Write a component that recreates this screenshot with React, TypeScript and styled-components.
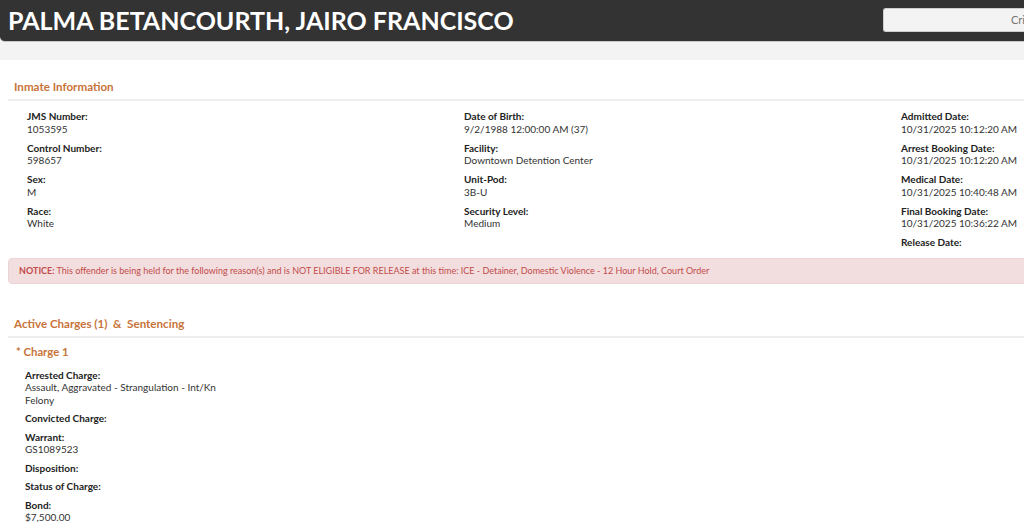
import styled, { createGlobalStyle } from 'styled-components'

const GlobalStyle = createGlobalStyle`
body {
    margin: 0;
    background: #ffffff;
    font-family: Lato, "Open Sans", "Liberation Sans", sans-serif;
    overflow: hidden;
}
`

const info = [
    [
        { label: "JMS Number:", value: "1053595" },
        { label: "Control Number:", value: "598657" },
        { label: "Sex:", value: "M" },
        { label: "Race:", value: "White" },
    ],
    [
        { label: "Date of Birth:", value: "9/2/1988 12:00:00 AM (37)" },
        { label: "Facility:", value: "Downtown Detention Center" },
        { label: "Unit-Pod:", value: "3B-U" },
        { label: "Security Level:", value: "Medium" },
    ],
    [
        { label: "Admitted Date:", value: "10/31/2025 10:12:20 AM" },
        { label: "Arrest Booking Date:", value: "10/31/2025 10:12:20 AM" },
        { label: "Medical Date:", value: "10/31/2025 10:40:48 AM" },
        { label: "Final Booking Date:", value: "10/31/2025 10:36:22 AM" },
        { label: "Release Date:", value: "" },
    ],
]

const charge = [
    { label: "Arrested Charge:", value: ["Assault, Aggravated - Strangulation - Int/Kn", "Felony"] },
    { label: "Convicted Charge:", value: [] },
    { label: "Warrant:", value: ["GS1089523"] },
    { label: "Disposition:", value: [] },
    { label: "Status of Charge:", value: [] },
    { label: "Bond:", value: ["$7,500.00"] },
]

const App = () => {
    return (
        <Page>
            <GlobalStyle />
            <Header>
                <Name>PALMA BETANCOURTH, JAIRO FRANCISCO</Name>
                <Search placeholder="Criteria" />
            </Header>
            <Band />
            <Panel>
                <SectionTitle>Inmate Information</SectionTitle>
                <InfoGrid>
                    {info.map((col, i) => (
                        <Column key={i}>
                            {col.map((f) => (
                                <Field key={f.label}>
                                    <Label>{f.label}</Label>
                                    {f.value && <Value>{f.value}</Value>}
                                </Field>
                            ))}
                        </Column>
                    ))}
                </InfoGrid>
                <Notice>
                    <b>NOTICE:</b> This offender is being held for the following reason(s) and is NOT ELIGIBLE FOR RELEASE at this time: ICE - Detainer, Domestic Violence - 12 Hour Hold, Court Order
                </Notice>
                <SectionTitle top={33}>Active Charges (1)&nbsp; &amp; &nbsp;Sentencing</SectionTitle>
                <ChargeTitle>* Charge 1</ChargeTitle>
                <ChargeList>
                    {charge.map((f) => (
                        <Field key={f.label}>
                            <Label>{f.label}</Label>
                            {f.value.map((v) => (
                                <Value key={v}>{v}</Value>
                            ))}
                        </Field>
                    ))}
                </ChargeList>
            </Panel>
        </Page>
    )
}

export default App

const Page = styled.div`
width: 1024px;
height: 532px;
overflow: hidden;
`

const Header = styled.div`
height: 41px;
background-color: #333333;
border-bottom: 1px solid #c8c8c8;
border-radius: 0 0 0 5px;
display: flex;
align-items: center;
justify-content: space-between;
padding-left: 8px;
`

const Name = styled.h1`
margin: 0;
color: #ffffff;
font-size: 25px;
font-weight: 700;
padding-bottom: 1px;
`

const Search = styled.input`
width: 141px;
height: 24px;
box-sizing: border-box;
margin-top: -2px;
background: #f3f3f3;
border: 1px solid #cfcfcf;
border-right: none;
border-radius: 3px 0 0 3px;
padding: 0 0 0 127px;
font-family: Lato, sans-serif;
font-size: 11px;
outline: none;

::placeholder {
    color: #a5b0b8;
}
`

const Band = styled.div`
height: 18px;
background: #f3f3f3;
`

const Panel = styled.div`
padding: 20px 0 0 8px;
`

const SectionTitle = styled.div<{ top?: number }>`
margin-top: ${({ top }) => top || 0}px;
padding: 0 0 5px 6px;
color: #c8733a;
font-size: 11.6px;
font-weight: 700;
line-height: 14px;
border-bottom: 2px solid #eeeeee;
`

const InfoGrid = styled.div`
display: grid;
grid-template-columns: 437px 437px 1fr;
padding: 9px 0 0 19px;
`

const Column = styled.div`
display: flex;
flex-direction: column;
gap: 6.5px;
`

const Field = styled.div`
display: flex;
flex-direction: column;
`

const Label = styled.div`
color: #222222;
font-size: 10px;
font-weight: 700;
line-height: 12.5px;
`

const Value = styled.div`
color: #333333;
font-size: 10px;
line-height: 12.5px;
`

const Notice = styled.div`
margin: 9px -12px 0 0;
padding: 6px 10px;
background: #f2dede;
border: 1px solid #ebd3d6;
border-radius: 4px;
color: #c34a4a;
font-size: 9px;
line-height: 12px;

b {
    font-weight: 700;
}
`

const ChargeTitle = styled.div`
padding: 7px 0 0 8px;
color: #c8733a;
font-size: 11.3px;
font-weight: 700;
line-height: 14px;
`

const ChargeList = styled.div`
display: flex;
flex-direction: column;
gap: 6px;
padding: 10px 0 0 17px;
`
